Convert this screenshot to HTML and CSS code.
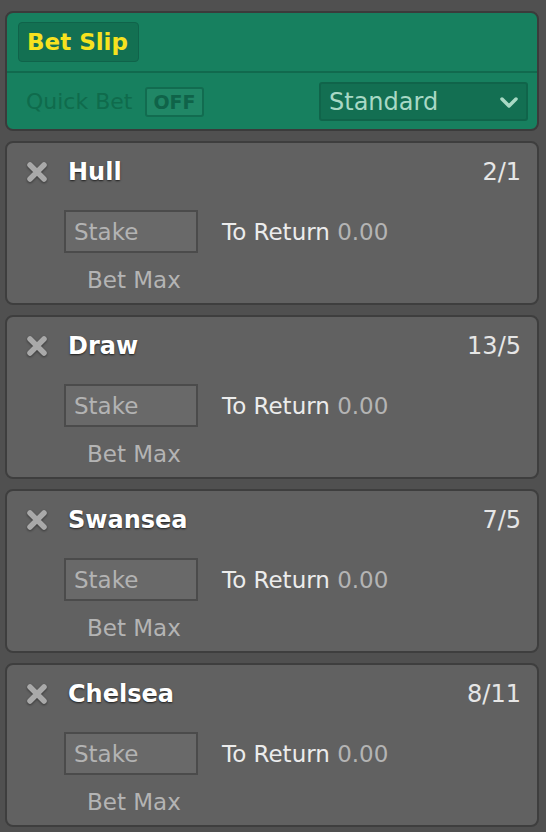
FILE: index.html
```html
<!DOCTYPE html>
<html>
<head>
<meta charset="utf-8">
<link rel="stylesheet" href="styles.css">
</head>
<body>
<div class="slip">
  <div class="header">
    <div class="header-top">
      <div class="tab">Bet Slip</div>
    </div>
    <div class="header-bottom">
      <span class="quick">Quick Bet</span>
      <span class="off">OFF</span>
      <div class="select">
        <span>Standard</span>
        <svg class="chev" width="18" height="12" viewBox="0 0 18 12"><path d="M2 2 L9 9 L16 2" fill="none" stroke="#a8d9c4" stroke-width="3.5" stroke-linecap="round" stroke-linejoin="round"/></svg>
      </div>
    </div>
  </div>

  <div class="card">
    <div class="card-head">
      <svg class="x" width="22" height="22" viewBox="0 0 22 22"><path d="M4 4 L18 18 M18 4 L4 18" stroke="#a9a9a9" stroke-width="5.5" stroke-linecap="round"/></svg>
      <span class="name">Hull</span>
      <span class="odds">2/1</span>
    </div>
    <div class="stake-row">
      <div class="stake">Stake</div>
      <span class="ret">To Return <span class="ret-val">0.00</span></span>
    </div>
    <div class="betmax">Bet Max</div>
  </div>

  <div class="card">
    <div class="card-head">
      <svg class="x" width="22" height="22" viewBox="0 0 22 22"><path d="M4 4 L18 18 M18 4 L4 18" stroke="#a9a9a9" stroke-width="5.5" stroke-linecap="round"/></svg>
      <span class="name">Draw</span>
      <span class="odds">13/5</span>
    </div>
    <div class="stake-row">
      <div class="stake">Stake</div>
      <span class="ret">To Return <span class="ret-val">0.00</span></span>
    </div>
    <div class="betmax">Bet Max</div>
  </div>

  <div class="card">
    <div class="card-head">
      <svg class="x" width="22" height="22" viewBox="0 0 22 22"><path d="M4 4 L18 18 M18 4 L4 18" stroke="#a9a9a9" stroke-width="5.5" stroke-linecap="round"/></svg>
      <span class="name">Swansea</span>
      <span class="odds">7/5</span>
    </div>
    <div class="stake-row">
      <div class="stake">Stake</div>
      <span class="ret">To Return <span class="ret-val">0.00</span></span>
    </div>
    <div class="betmax">Bet Max</div>
  </div>

  <div class="card">
    <div class="card-head">
      <svg class="x" width="22" height="22" viewBox="0 0 22 22"><path d="M4 4 L18 18 M18 4 L4 18" stroke="#a9a9a9" stroke-width="5.5" stroke-linecap="round"/></svg>
      <span class="name">Chelsea</span>
      <span class="odds">8/11</span>
    </div>
    <div class="stake-row">
      <div class="stake">Stake</div>
      <span class="ret">To Return <span class="ret-val">0.00</span></span>
    </div>
    <div class="betmax">Bet Max</div>
  </div>
</div>
</body>
</html>
```
FILE: styles.css
```css
html, body {
  margin: 0;
  padding: 0;
  background: #505050;
}
body {
  font-family: "DejaVu Sans", Verdana, sans-serif;
  font-size: 23px;
  color: #e8e8e8;
}
.slip {
  padding: 11px 7px 0 5px;
  display: flex;
  flex-direction: column;
  gap: 10px;
}
.header {
  background: #17805f;
  border: 2px solid #3b3b3b;
  border-radius: 8px;
  height: 120px;
  box-sizing: border-box;
}
.header-top {
  padding: 9px 11px;
  border-bottom: 2px solid #116a4e;
}
.tab {
  display: inline-flex;
  align-items: center;
  height: 40px;
  box-sizing: border-box;
  padding: 0 10px 0 8px;
  background: #137052;
  border: 1px solid #10634a;
  border-radius: 4px;
  color: #f7e21f;
  font-weight: bold;
  font-size: 23px;
}
.header-bottom {
  display: flex;
  align-items: center;
  padding: 9px 9px 0 19px;
}
.quick {
  color: #0f6b4c;
  font-size: 22px;
}
.off {
  margin-left: 13px;
  height: 30px;
  box-sizing: border-box;
  display: inline-flex;
  align-items: center;
  padding: 0 6px;
  border: 2px solid #126c50;
  background: #208766;
  border-radius: 3px;
  color: #0f6349;
  font-weight: bold;
  font-size: 19px;
}
.select {
  margin-left: auto;
  width: 209px;
  height: 39px;
  box-sizing: border-box;
  display: flex;
  align-items: center;
  justify-content: space-between;
  padding: 0 8px 0 8px;
  background: #136f52;
  border: 2px solid #10644a;
  border-radius: 3px;
  color: #a8d8c5;
  font-size: 24px;
}
.chev {
  margin-top: 2px;
}
.card {
  background: #616161;
  border: 2px solid #3e3e3e;
  border-radius: 8px;
  height: 164px;
  box-sizing: border-box;
  padding: 15px 16px 0 19px;
}
.card-head {
  display: flex;
  align-items: center;
  height: 28px;
}
.x {
  filter: drop-shadow(0 1px 1px rgba(0,0,0,0.45));
}
.name {
  margin-left: 20px;
  font-weight: bold;
  font-size: 24px;
  color: #ffffff;
  text-shadow: 0 1px 2px rgba(0,0,0,0.7);
}
.odds {
  margin-left: auto;
  color: #e6e6e6;
  font-size: 24px;
}
.stake-row {
  display: flex;
  align-items: center;
  margin-top: 24px;
  margin-left: 38px;
}
.stake {
  width: 134px;
  height: 43px;
  box-sizing: border-box;
  border: 2px solid #4b4b4b;
  background: #696969;
  color: #b3b3b3;
  display: flex;
  align-items: center;
  padding-left: 8px;
}
.ret {
  margin-left: 24px;
  color: #ececec;
}
.ret-val {
  color: #b4b4b4;
}
.betmax {
  margin-top: 14px;
  margin-left: 61px;
  line-height: 26px;
  color: #b4b4b4;
}
```
